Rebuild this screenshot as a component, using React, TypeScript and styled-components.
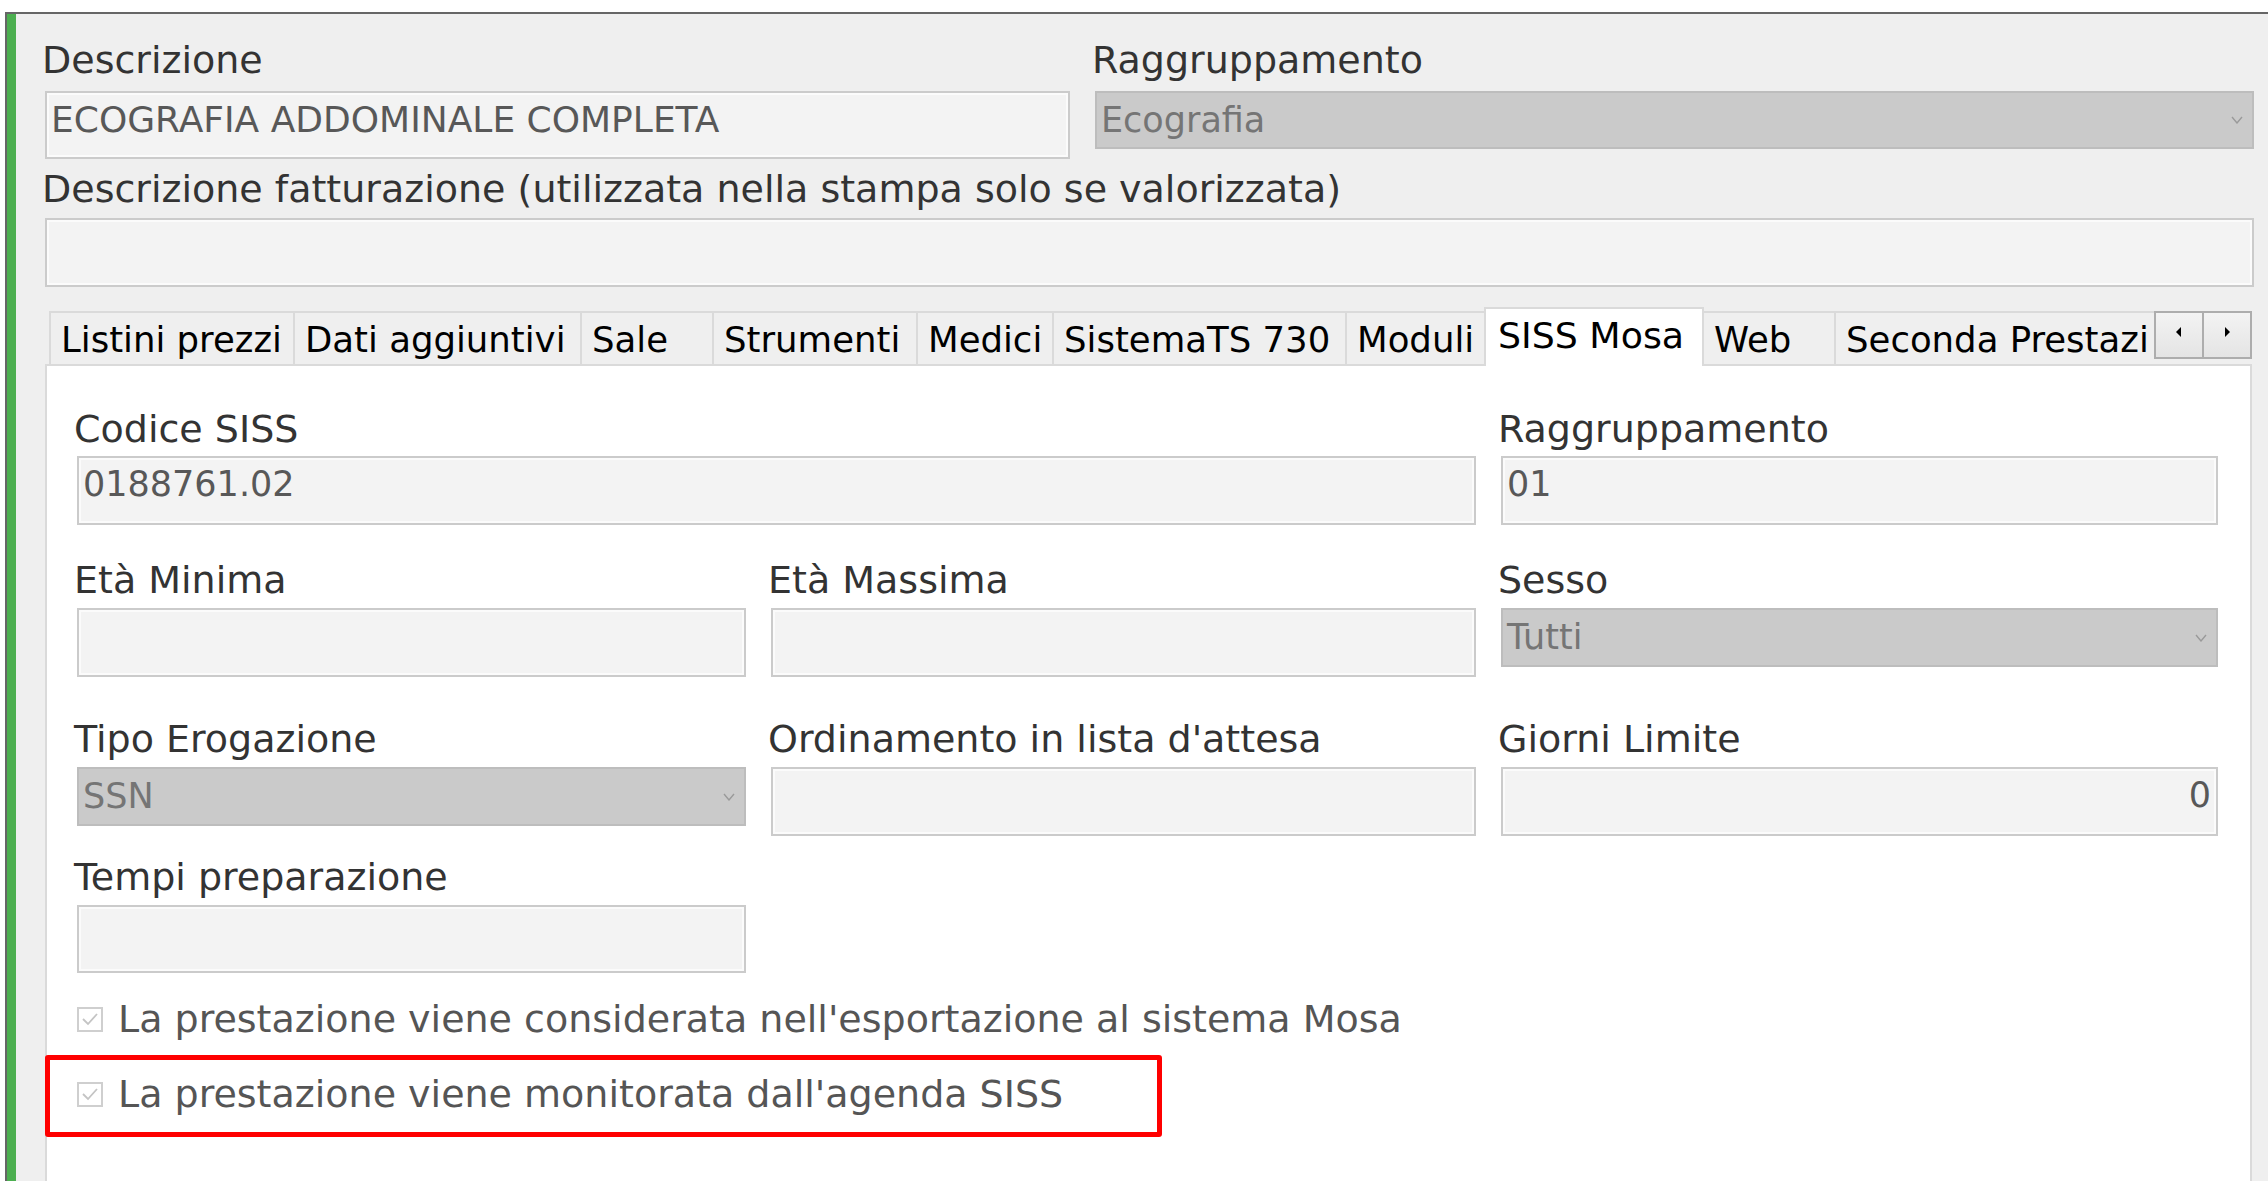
import React from "react";
import styled, { createGlobalStyle, css } from "styled-components";

const GlobalStyle = createGlobalStyle`
  html, body { margin: 0; padding: 0; background: #ffffff; }
  body { font-family: "DejaVu Sans", Verdana, sans-serif; overflow: hidden; }
  *, *::before, *::after { box-sizing: border-box; }
`;

const Frame = styled.div`
  display: flex;
  height: calc(100vh - 12px);
  margin: 12px 0 0 5px;
  border-top: 2px solid #666666;
  border-left: 2px solid #666666;
  overflow: hidden;
`;

const AccentStrip = styled.div`
  flex: none;
  width: 9px;
  background: #4caf50;
`;

const Content = styled.div`
  flex: 1;
  min-width: 0;
  display: flex;
  flex-direction: column;
  background: #efefef;
  padding: 26px 14px 0 29px;
`;

const TopGrid = styled.div`
  display: grid;
  grid-template-columns: 1025px 1fr;
  column-gap: 25px;
`;

const Field = styled.div<{ $span?: number; $gap: number; $mt?: number }>`
  display: flex;
  flex-direction: column;
  min-width: 0;
  gap: ${(p) => p.$gap}px;
  grid-column: span ${(p) => p.$span ?? 1};
  margin-top: ${(p) => p.$mt ?? 0}px;
`;

const Label = styled.div`
  height: 40px;
  margin-left: -3px;
  font-size: 38px;
  line-height: 40px;
  color: #333333;
  white-space: nowrap;
`;

const TextBox = styled.div<{ $h: number; $right?: boolean; $size?: number }>`
  height: ${(p) => p.$h}px;
  border: 2px solid #cbcbcb;
  box-shadow: inset 0 0 0 2px #fbfbfb;
  background: #f3f3f3;
  padding: 6px 5px 0 4px;
  font-size: ${(p) => p.$size ?? 35}px;
  line-height: 41px;
  color: #585858;
  text-align: ${(p) => (p.$right ? "right" : "left")};
  white-space: nowrap;
  overflow: hidden;
`;

const SelectBox = styled.div<{ $h: number }>`
  height: ${(p) => p.$h}px;
  display: flex;
  align-items: center;
  justify-content: space-between;
  border: 2px solid #bdbdbd;
  background: #cacaca;
  padding: 0 9px 0 4px;
  font-size: 35px;
  line-height: 41px;
  color: #757575;
  white-space: nowrap;
`;

const TabSection = styled.div`
  flex: 1;
  min-height: 0;
  display: flex;
  flex-direction: column;
  margin-top: 20px;
  margin-right: 2px;
`;

const TabBar = styled.div`
  position: relative;
  z-index: 1;
  display: flex;
  align-items: flex-start;
  height: 59px;
  margin-bottom: -2px;
  padding-left: 4px;
`;

const TabStrip = styled.div`
  flex: 1;
  min-width: 0;
  height: 100%;
  display: flex;
  align-items: flex-end;
  overflow: hidden;
`;

const Tab = styled.div<{ $w: number; $active?: boolean }>`
  position: relative;
  flex: none;
  width: ${(p) => p.$w}px;
  height: 55px;
  margin-right: -2px;
  border: 2px solid #dadada;
  background: #efefef;
  padding: 6px 0 0 10px;
  font-size: 35.5px;
  line-height: 41px;
  color: #000000;
  white-space: nowrap;
  overflow: hidden;
  ${(p) =>
    p.$active &&
    css`
      z-index: 1;
      height: 59px;
      border-bottom: none;
      background: #ffffff;
      padding-left: 12px;
      font-size: 36.3px;
    `}
`;

const Scroller = styled.div`
  flex: none;
  display: flex;
  height: 48px;
  margin-top: 4px;
  border: 2px solid #adadad;
  background: linear-gradient(#f3f3f3, #e4e4e4);
`;

const ScrollButton = styled.div`
  width: 46px;
  display: flex;
  align-items: center;
  justify-content: center;
  padding-bottom: 6px;
  & + & {
    width: 48px;
    border-left: 2px solid #adadad;
  }
`;

const Panel = styled.div`
  flex: 1;
  position: relative;
  background: #ffffff;
  border: 2px solid #dadada;
  border-bottom: none;
  padding: 43px 0 0 30px;
`;

const PanelRow = styled.div<{ $mt: number }>`
  display: grid;
  grid-template-columns: 669px 705px 717px;
  column-gap: 25px;
  align-items: start;
  margin-top: ${(p) => p.$mt}px;
`;

const CheckRow = styled.div<{ $mt: number; $highlight?: boolean }>`
  position: relative;
  display: flex;
  align-items: center;
  gap: 15px;
  width: max-content;
  height: 40px;
  margin-top: ${(p) => p.$mt}px;
  font-size: 38px;
  line-height: 40px;
  color: #555555;
  white-space: nowrap;
  ${(p) =>
    p.$highlight &&
    css`
      &::after {
        content: "";
        position: absolute;
        left: -32px;
        top: -19px;
        width: 1117px;
        height: 82px;
        border: 5px solid #ff0000;
        border-radius: 3px;
        pointer-events: none;
      }
    `}
`;

const CheckBox = styled.span`
  flex: none;
  width: 26px;
  height: 25px;
  display: flex;
  align-items: center;
  justify-content: center;
  border: 2px solid #cfcfcf;
  background: #ffffff;
`;

const Chevron = () => (
  <svg width="12" height="8" viewBox="0 0 12 8" fill="none">
    <polyline points="1,1 6,7 11,1" stroke="#9a9a9a" strokeWidth="1.4" />
  </svg>
);

const CheckMark = () => (
  <svg width="18" height="16" viewBox="0 0 18 16" fill="none">
    <polyline points="2,8 7,13 16,3" stroke="#c4c4c4" strokeWidth="1.8" />
  </svg>
);

const Arrow = ({ dir }: { dir: "left" | "right" }) => (
  <svg width="6" height="10" viewBox="0 0 6 10">
    {dir === "left" ? (
      <polygon points="5,0 5,10 0,5" fill="#000" />
    ) : (
      <polygon points="1,0 1,10 6,5" fill="#000" />
    )}
  </svg>
);

const tabs: { label: string; w: number; active?: boolean }[] = [
  { label: "Listini prezzi", w: 246 },
  { label: "Dati aggiuntivi", w: 289 },
  { label: "Sale", w: 134 },
  { label: "Strumenti", w: 206 },
  { label: "Medici", w: 138 },
  { label: "SistemaTS 730", w: 295 },
  { label: "Moduli", w: 141 },
  { label: "SISS Mosa", w: 220, active: true },
  { label: "Web", w: 134 },
  { label: "Seconda Prestazi", w: 420 },
];

export default function App() {
  return (
    <>
      <GlobalStyle />
      <Frame>
        <AccentStrip />
        <Content>
          <TopGrid>
            <Field $gap={11}>
              <Label>Descrizione</Label>
              <TextBox $h={68} $size={36}>
                ECOGRAFIA ADDOMINALE COMPLETA
              </TextBox>
            </Field>
            <Field $gap={11}>
              <Label>Raggruppamento</Label>
              <SelectBox $h={58}>
                <span>Ecografia</span>
                <Chevron />
              </SelectBox>
            </Field>
            <Field $gap={9} $span={2} $mt={10}>
              <Label>Descrizione fatturazione (utilizzata nella stampa solo se valorizzata)</Label>
              <TextBox $h={69} />
            </Field>
          </TopGrid>

          <TabSection>
            <TabBar>
              <TabStrip>
                {tabs.map((t) => (
                  <Tab key={t.label} $w={t.w} $active={t.active}>
                    {t.label}
                  </Tab>
                ))}
              </TabStrip>
              <Scroller>
                <ScrollButton>
                  <Arrow dir="left" />
                </ScrollButton>
                <ScrollButton>
                  <Arrow dir="right" />
                </ScrollButton>
              </Scroller>
            </TabBar>

            <Panel>
              <PanelRow $mt={0}>
                <Field $gap={7} $span={2}>
                  <Label>Codice SISS</Label>
                  <TextBox $h={69}>0188761.02</TextBox>
                </Field>
                <Field $gap={7}>
                  <Label>Raggruppamento</Label>
                  <TextBox $h={69}>01</TextBox>
                </Field>
              </PanelRow>

              <PanelRow $mt={35}>
                <Field $gap={8}>
                  <Label>Età Minima</Label>
                  <TextBox $h={69} />
                </Field>
                <Field $gap={8}>
                  <Label>Età Massima</Label>
                  <TextBox $h={69} />
                </Field>
                <Field $gap={8}>
                  <Label>Sesso</Label>
                  <SelectBox $h={59}>
                    <span>Tutti</span>
                    <Chevron />
                  </SelectBox>
                </Field>
              </PanelRow>

              <PanelRow $mt={42}>
                <Field $gap={8}>
                  <Label>Tipo Erogazione</Label>
                  <SelectBox $h={59}>
                    <span>SSN</span>
                    <Chevron />
                  </SelectBox>
                </Field>
                <Field $gap={8}>
                  <Label>Ordinamento in lista d'attesa</Label>
                  <TextBox $h={69} />
                </Field>
                <Field $gap={8}>
                  <Label>Giorni Limite</Label>
                  <TextBox $h={69} $right>
                    0
                  </TextBox>
                </Field>
              </PanelRow>

              <PanelRow $mt={21}>
                <Field $gap={8}>
                  <Label>Tempi preparazione</Label>
                  <TextBox $h={68} />
                </Field>
              </PanelRow>

              <CheckRow $mt={26}>
                <CheckBox>
                  <CheckMark />
                </CheckBox>
                La prestazione viene considerata nell'esportazione al sistema Mosa
              </CheckRow>

              <CheckRow $mt={35} $highlight>
                <CheckBox>
                  <CheckMark />
                </CheckBox>
                La prestazione viene monitorata dall'agenda SISS
              </CheckRow>
            </Panel>
          </TabSection>
        </Content>
      </Frame>
    </>
  );
}
